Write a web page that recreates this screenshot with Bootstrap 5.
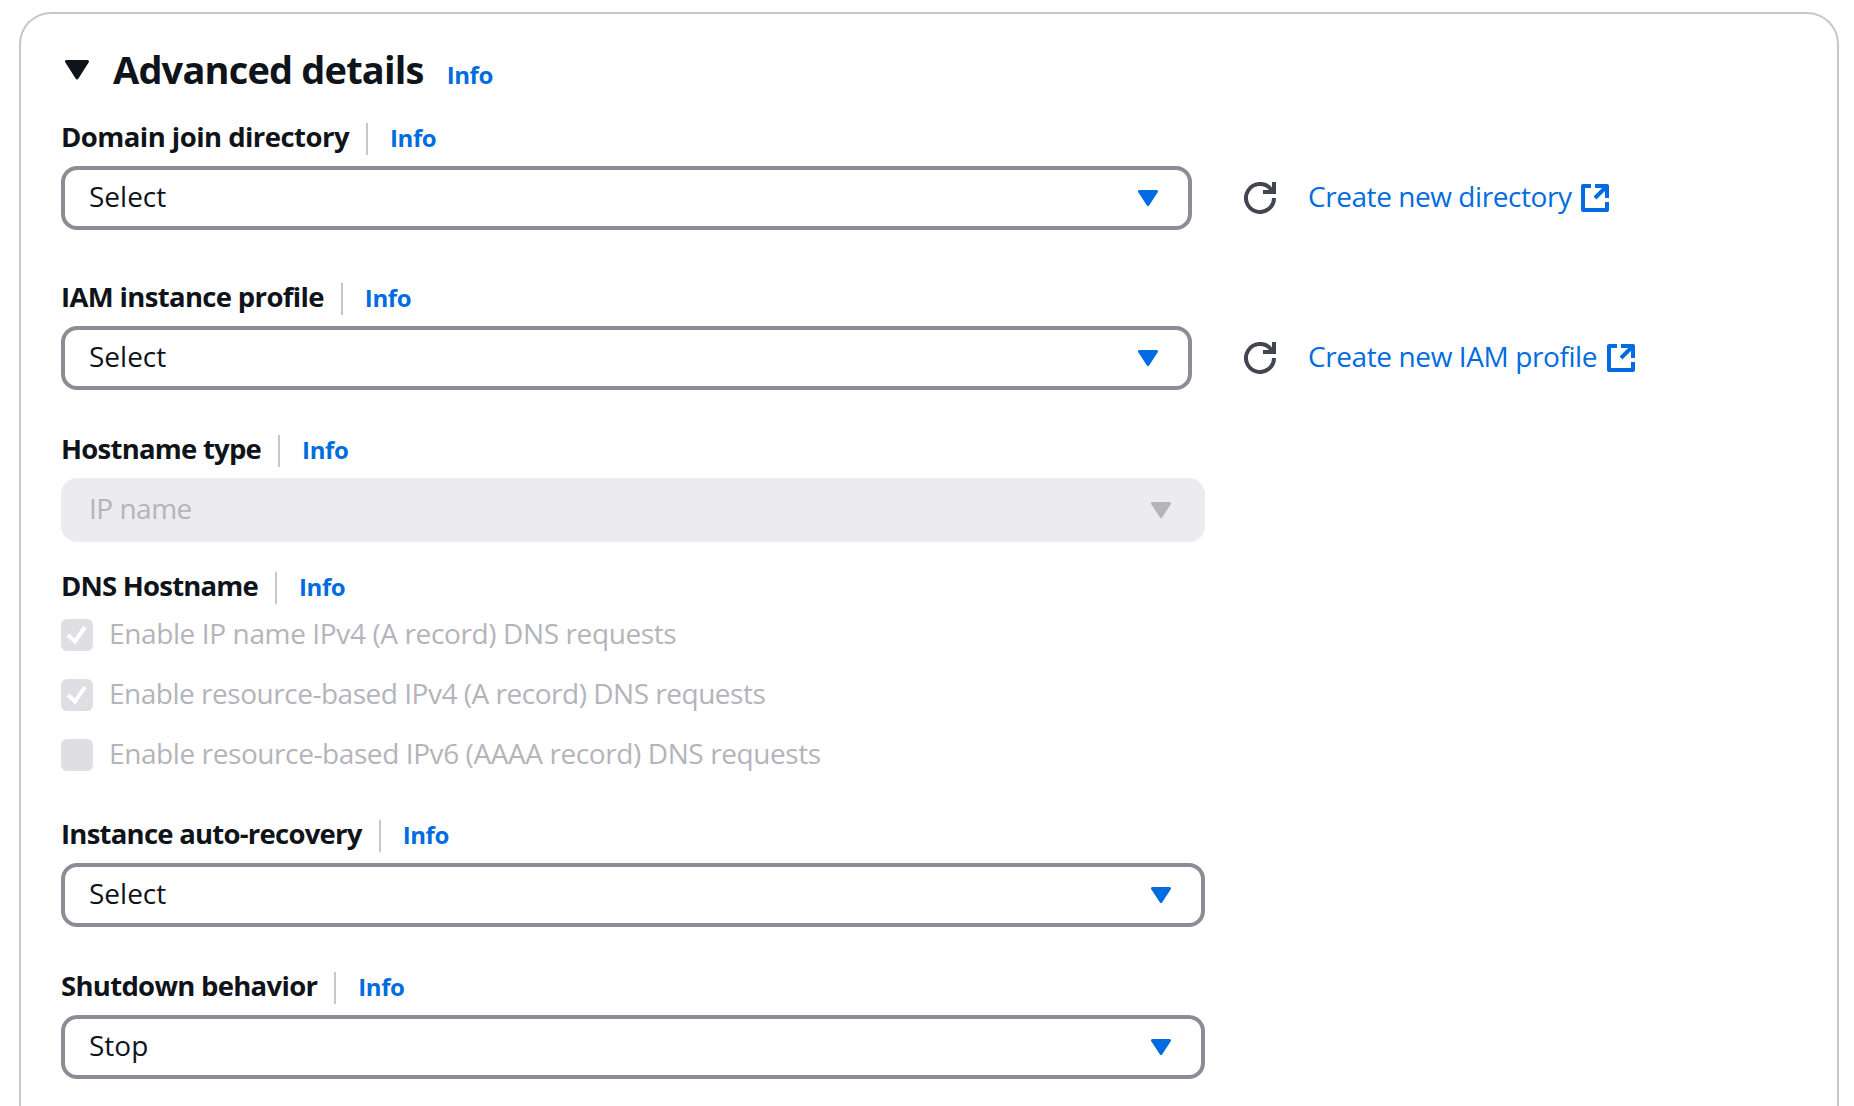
<!DOCTYPE html>
<html lang="en">
<head>
<meta charset="utf-8">
<title>Advanced details</title>
<link rel="stylesheet" href="https://cdn.jsdelivr.net/npm/bootstrap@5.3.0/dist/css/bootstrap.min.css">
<script src="https://cdn.jsdelivr.net/npm/bootstrap@5.3.0/dist/js/bootstrap.bundle.min.js"></script>
<style>
  html, body { height: 100%; overflow: hidden; }
  body { font-family: "Open Sans", "Noto Sans", sans-serif; font-size: 28px; color: #0f141a; background: #fff; }
  svg { display: block; flex: none; }
  a { color: #006ce0; text-decoration: none; }
  .page-wrap { padding: 12px 15px 0 19px; height: 100%; }
  .panel { height: 100%; border: 2px solid #c6c6cd; border-bottom: 0; border-radius: 32px 32px 0 0; padding: 35px 40px 0; }
  .panel-head { height: 40px; margin-bottom: 34px; padding-left: 4px; }
  .panel-head svg { margin-top: 11px; }
  .panel-title { font-size: 38px; font-weight: 700; line-height: 40px; letter-spacing: -.82px; margin: 0 23px 0 24px; }
  .info-link { font-size: 24px; font-weight: 700; line-height: 29px; letter-spacing: -.4px; }
  .panel-head .info-link { line-height: 40px; }
  .field { margin-bottom: 53px; }
  .field-tight { margin-bottom: 45px; }
  .field-dns { padding-top: 30px; }
  .field-label { height: 32px; margin-bottom: 11px; }
  .field-dns .field-label { margin-bottom: 15px; }
  .label-text { font-size: 27.5px; font-weight: 700; line-height: 27px; white-space: nowrap; }
  .rule { width: 2px; height: 32px; background: #c6c6cd; margin: 0 22px 0 17px; }
  .picker { width: 1144px; height: 64px; border: 4px solid #8c8c94; border-radius: 16px; background: #fff; color: inherit;
            padding: 0 30px 4px 24px; font-size: 28px; line-height: 52px; text-align: left; }
  .picker svg { margin-top: 4px; fill: #006ce0; stroke: #006ce0; }
  .picker-short { width: 1131px; }
  .picker:disabled { background: #ebebf0; border-color: #ebebf0; color: #b4b4bb; }
  .picker:disabled svg { fill: #b4b4bb; stroke: #b4b4bb; }
  .refresh { margin: 0 32px 0 52px; }
  .create-link { line-height: 52px; margin-bottom: 4px; white-space: nowrap; }
  .ext { margin-left: 10px; }
  .ticks { gap: 28px; margin-bottom: 49px; }
  .tick-row { height: 32px; color: #b4b4bb; gap: 16px; }
  .tick-box { width: 32px; height: 32px; border-radius: 6px; background: #dedee3; flex: none; }
  .tick-text { line-height: 28px; white-space: nowrap; }
  .t-domain { letter-spacing: -.54px } .t-iam { letter-spacing: -.66px }
  .t-host { letter-spacing: -.76px } .t-dns { letter-spacing: -.8px } .t-auto { letter-spacing: -.76px }
  .t-shut { letter-spacing: -.71px } .t-name { letter-spacing: -.5px } .t-a { letter-spacing: -.38px }
  .t-b { letter-spacing: -.48px } .t-c { letter-spacing: -.41px } .t-dir { letter-spacing: -.44px } .t-prof { letter-spacing: -.4px }
</style>
</head>
<body>
<svg width="0" height="0" class="position-absolute">
  <symbol id="caret" viewBox="0 0 20 16"><path d="M1.5 1.500h17L10 14.500z" stroke-width="3" stroke-linejoin="round"/></symbol>
  <symbol id="refresh" viewBox="0 0 32 32"><path d="M30 16a14 14 0 1 1-3.500-9.300L29 10M30 0v10H19" fill="none" stroke="#424650" stroke-width="4"/></symbol>
  <symbol id="external" viewBox="0 0 28 28"><path d="M10 2H2v24h24v-8M14 2h12v12M26 2L14 14" fill="none" stroke="#006ce0" stroke-width="4" stroke-linejoin="round"/></symbol>
  <symbol id="check" viewBox="0 0 32 32"><path d="M7 16l7 6.500L24 8" fill="none" stroke="#fff" stroke-width="4"/></symbol>
</svg>
<div class="page-wrap">
  <main class="panel">
    <header class="panel-head d-flex align-items-baseline">
      <svg class="align-self-start" width="24" height="20" viewBox="0 0 24 20"><path d="M1.500 1.500h21L12 18z" fill="#0f141a" stroke="#0f141a" stroke-width="3" stroke-linejoin="round"/></svg>
      <h2 class="panel-title">Advanced details</h2>
      <a href="#" class="info-link">Info</a>
    </header>

    <section class="field">
      <div class="field-label d-flex align-items-start"><span class="label-text t-domain">Domain join directory</span><span class="rule"></span><a href="#" class="info-link">Info</a></div>
      <div class="d-flex align-items-center">
        <button type="button" class="picker picker-short d-flex justify-content-between align-items-center"><span>Select</span><svg width="20" height="16"><use href="#caret"/></svg></button>
        <svg class="refresh" width="32" height="32"><use href="#refresh"/></svg>
        <a href="#" class="create-link t-dir">Create new directory</a>
        <svg class="ext" width="28" height="28"><use href="#external"/></svg>
      </div>
    </section>

    <section class="field field-tight">
      <div class="field-label d-flex align-items-start"><span class="label-text t-iam">IAM instance profile</span><span class="rule"></span><a href="#" class="info-link">Info</a></div>
      <div class="d-flex align-items-center">
        <button type="button" class="picker picker-short d-flex justify-content-between align-items-center"><span>Select</span><svg width="20" height="16"><use href="#caret"/></svg></button>
        <svg class="refresh" width="32" height="32"><use href="#refresh"/></svg>
        <a href="#" class="create-link t-prof">Create new IAM profile</a>
        <svg class="ext" width="28" height="28"><use href="#external"/></svg>
      </div>
    </section>

    <section>
      <div class="field-label d-flex align-items-start"><span class="label-text t-host">Hostname type</span><span class="rule"></span><a href="#" class="info-link">Info</a></div>
      <button type="button" disabled class="picker d-flex justify-content-between align-items-center"><span class="t-name">IP name</span><svg width="20" height="16"><use href="#caret"/></svg></button>
    </section>

    <section class="field-dns">
      <div class="field-label d-flex align-items-start"><span class="label-text t-dns">DNS Hostname</span><span class="rule"></span><a href="#" class="info-link">Info</a></div>
      <div class="ticks d-flex flex-column">
        <div class="tick-row d-flex align-items-start"><span class="tick-box"><svg width="32" height="32"><use href="#check"/></svg></span><span class="tick-text t-a">Enable IP name IPv4 (A record) DNS requests</span></div>
        <div class="tick-row d-flex align-items-start"><span class="tick-box"><svg width="32" height="32"><use href="#check"/></svg></span><span class="tick-text t-b">Enable resource-based IPv4 (A record) DNS requests</span></div>
        <div class="tick-row d-flex align-items-start"><span class="tick-box"></span><span class="tick-text t-c">Enable resource-based IPv6 (AAAA record) DNS requests</span></div>
      </div>
    </section>

    <section class="field field-tight">
      <div class="field-label d-flex align-items-start"><span class="label-text t-auto">Instance auto-recovery</span><span class="rule"></span><a href="#" class="info-link">Info</a></div>
      <button type="button" class="picker d-flex justify-content-between align-items-center"><span>Select</span><svg width="20" height="16"><use href="#caret"/></svg></button>
    </section>

    <section>
      <div class="field-label d-flex align-items-start"><span class="label-text t-shut">Shutdown behavior</span><span class="rule"></span><a href="#" class="info-link">Info</a></div>
      <button type="button" class="picker d-flex justify-content-between align-items-center"><span>Stop</span><svg width="20" height="16"><use href="#caret"/></svg></button>
    </section>
  </main>
</div>
</body>
</html>
